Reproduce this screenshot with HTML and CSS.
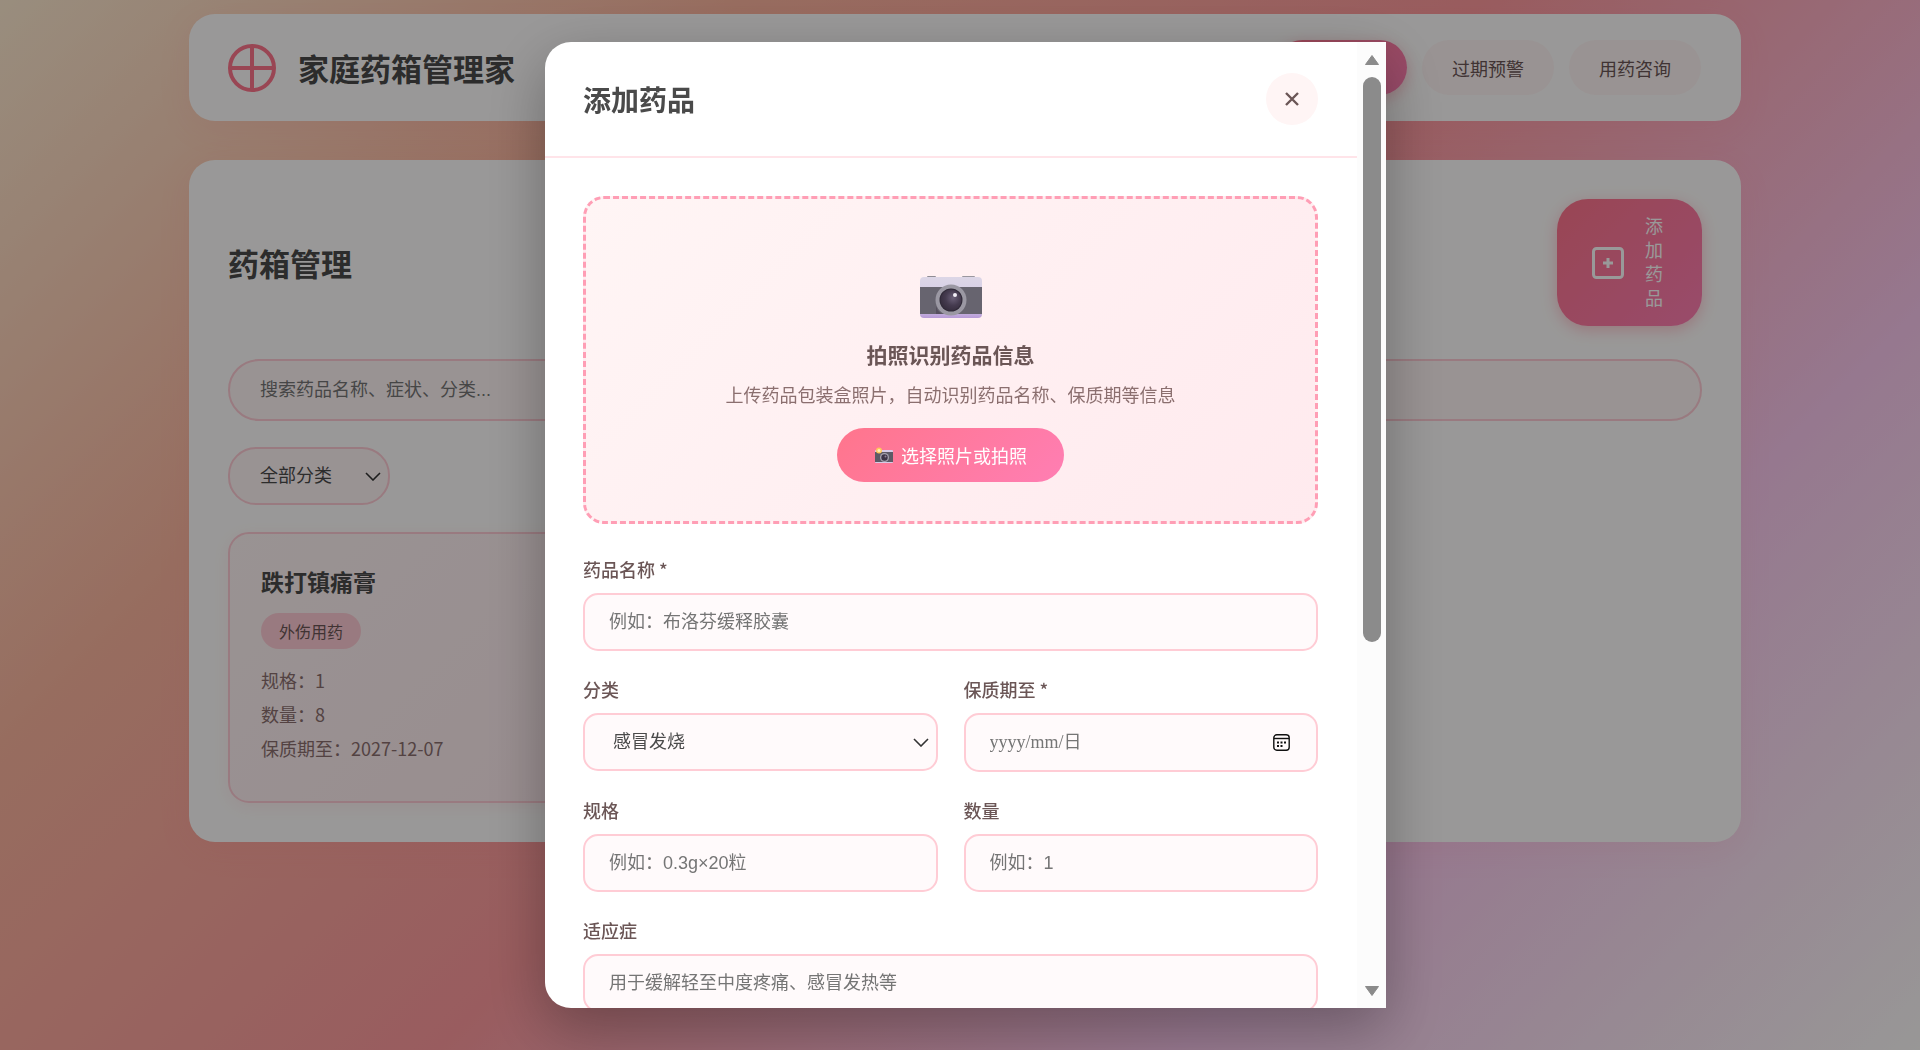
FILE: index.html
```html
<!DOCTYPE html>
<html lang="zh-CN">
<head>
    <meta charset="UTF-8">
    <meta name="viewport" content="width=device-width, initial-scale=1.0">
    <title>家庭药箱管理家</title>
    <link rel="stylesheet" href="styles.css">
</head>
<body>
    <div class="container">
        <header class="header">
            <div class="logo">
                <svg class="logo-icon" viewBox="0 0 48 48" fill="none" stroke="#ff758c" stroke-width="4">
                    <circle cx="24" cy="24" r="22"/>
                    <path d="M24 2v44M2 24h44"/>
                </svg>
                <h1>家庭药箱管理家</h1>
            </div>
            <nav class="nav">
                <button type="button" class="nav-btn active">药箱管理</button>
                <button type="button" class="nav-btn">过期预警</button>
                <button type="button" class="nav-btn">用药咨询</button>
            </nav>
        </header>

        <main class="panel">
            <div class="panel-header">
                <h2>药箱管理</h2>
                <button type="button" class="add-btn">
                    <svg class="add-icon" viewBox="0 0 32 32" fill="none" stroke="currentColor" stroke-width="3">
                        <rect x="1.5" y="1.5" width="29" height="29" rx="3"/>
                        <path d="M16 11v10M11 16h10"/>
                    </svg>
                    <span class="add-text">添加药品</span>
                </button>
            </div>
            <input type="text" class="search" placeholder="搜索药品名称、症状、分类..." aria-label="搜索药品">
            <select class="filter" aria-label="药品分类">
                <option>全部分类</option>
                <option>感冒发烧</option>
                <option>外伤用药</option>
            </select>
            <div class="medicine-grid">
                <article class="medicine-card">
                    <h3>跌打镇痛膏</h3>
                    <span class="tag">外伤用药</span>
                    <p>规格：1</p>
                    <p>数量：8</p>
                    <p>保质期至：2027-12-07</p>
                </article>
            </div>
        </main>
    </div>

    <div class="overlay">
        <div class="modal" role="dialog" aria-labelledby="modalTitle">
            <div class="modal-content">
                <div class="modal-header">
                    <h2 id="modalTitle">添加药品</h2>
                    <button type="button" class="close-btn" aria-label="关闭">
                        <svg viewBox="0 0 14 14" fill="none" stroke="currentColor" stroke-width="2.4">
                            <path d="M1 1l12 12M13 1L1 13"/>
                        </svg>
                    </button>
                </div>
                <form class="modal-body">
                    <div class="upload">
                        <svg class="camera" viewBox="0 0 62 42">
                            <defs>
                                <linearGradient id="cameraBody" x1="0" y1="0" x2="0" y2="1">
                                    <stop offset="0" stop-color="#dcd6e6"/>
                                    <stop offset=".75" stop-color="#d3c8e6"/>
                                    <stop offset="1" stop-color="#b79ad6"/>
                                </linearGradient>
                                <radialGradient id="cameraLens" cx=".6" cy=".4" r=".6">
                                    <stop offset="0" stop-color="#6b6078"/>
                                    <stop offset=".6" stop-color="#453b4f"/>
                                    <stop offset="1" stop-color="#382f40"/>
                                </radialGradient>
                            </defs>
                            <rect x="7" y="0" width="9" height="4" rx="1" fill="#8f8c94"/>
                            <rect x="42" y="0" width="13" height="4" rx="1" fill="#9a979f"/>
                            <rect x="0" y="1" width="62" height="41" rx="4" fill="url(#cameraBody)"/>
                            <rect x="0" y="11" width="62" height="27" fill="#67646f"/>
                            <path d="M16 30q2 8 9 8h-9z" fill="#57505f"/>
                            <circle cx="31" cy="24" r="15.5" fill="#9b98a3"/>
                            <circle cx="31" cy="24" r="11.5" fill="#2f2937"/>
                            <circle cx="31" cy="24" r="10.5" fill="url(#cameraLens)"/>
                            <circle cx="35" cy="19" r="2" fill="#f3f0f7"/>
                        </svg>
                        <h3>拍照识别药品信息</h3>
                        <p>上传药品包装盒照片，自动识别药品名称、保质期等信息</p>
                        <button type="button" class="upload-btn">
                            <svg class="camera-small" viewBox="0 0 20 16">
                                <rect x="1" y="3" width="18" height="13" rx="1" fill="#d6cbe6"/>
                                <rect x="1" y="5" width="18" height="10" fill="#5d5a66"/>
                                <circle cx="10.5" cy="10.5" r="4.5" fill="#a7a3b0"/>
                                <circle cx="10.5" cy="10.5" r="3.2" fill="#3c3446"/>
                                <circle cx="11.5" cy="9.5" r="1" fill="#8b8396"/>
                                <circle cx="5" cy="3.5" r="3" fill="#ffc65c"/>
                                <circle cx="5" cy="3.5" r="1.5" fill="#fff0b8"/>
                            </svg>
                            <span>选择照片或拍照</span>
                        </button>
                    </div>

                    <div class="form-group">
                        <label for="name">药品名称 *</label>
                        <input type="text" id="name" placeholder="例如：布洛芬缓释胶囊">
                    </div>
                    <div class="form-row">
                        <div class="form-group">
                            <label for="category">分类</label>
                            <select id="category">
                                <option>感冒发烧</option>
                                <option>外伤用药</option>
                            </select>
                        </div>
                        <div class="form-group">
                            <label for="expiry">保质期至 *</label>
                            <div class="date-field">
                                <input type="text" id="expiry" placeholder="yyyy/mm/日">
                                <svg class="calendar" viewBox="0 0 17 17" fill="none" stroke="#111" stroke-width="1.4">
                                    <rect x=".8" y=".8" width="15.4" height="15.4" rx="3"/>
                                    <path d="M1 4.5h15"/>
                                    <path d="M4 8.5h2M7.5 8.5h2M11 8.5h2M4 12h2M7.5 12h2" stroke-width="2"/>
                                </svg>
                            </div>
                        </div>
                    </div>
                    <div class="form-row">
                        <div class="form-group">
                            <label for="spec">规格</label>
                            <input type="text" id="spec" placeholder="例如：0.3g×20粒">
                        </div>
                        <div class="form-group">
                            <label for="amount">数量</label>
                            <input type="text" id="amount" placeholder="例如：1">
                        </div>
                    </div>
                    <div class="form-group">
                        <label for="usage">适应症</label>
                        <input type="text" id="usage" placeholder="用于缓解轻至中度疼痛、感冒发热等">
                    </div>
                </form>
            </div>
            <div class="scrollbar" aria-hidden="true">
                <svg viewBox="0 0 16 12"><path d="M8 1.5L14.5 10.5H1.5z"/></svg>
                <div class="scroll-track"><div class="scroll-thumb"></div></div>
                <svg viewBox="0 0 16 12"><path d="M8 10.5L1.5 1.5h13z"/></svg>
            </div>
        </div>
    </div>
</body>
</html>
```
FILE: styles.css
```css
* {
    margin: 0;
    padding: 0;
    box-sizing: border-box;
}
body {
    min-height: 100vh;
    padding: 14px 8px 14px 18px;
    font-family: "Noto Sans CJK SC", sans-serif;
    font-size: 18px;
    color: #4a4a4a;
    background: linear-gradient(135deg, #ffecd2 0%, #fcb69f 25%, #ff9a9e 50%, #fbc8ee 75%, #fdfcfb 100%);
}
button, input, select {
    font-family: "Liberation Sans", "Noto Sans CJK SC", sans-serif;
    font-size: 18px;
}
button {
    border: none;
    cursor: pointer;
}
.container {
    max-width: 1552px;
    margin: 0 auto;
}

/* header */
.header {
    display: flex;
    justify-content: space-between;
    align-items: center;
    padding: 26px 40px 26px 39px;
    margin-bottom: 39px;
    background: #fffefd;
    border-radius: 26px;
    box-shadow: 0 8px 32px rgba(255, 117, 140, 0.1);
}
.logo {
    display: flex;
    align-items: center;
    gap: 22px;
}
.logo-icon {
    width: 48px;
    height: 48px;
}
.logo h1, .panel-header h2 {
    font-size: 31px;
    line-height: 46px;
}
.nav {
    display: flex;
    gap: 15px;
}
.nav-btn {
    height: 55px;
    padding: 0 30px;
    border-radius: 28px;
    background: #fff5f5;
    color: #6b5656;
}
.nav-btn.active {
    color: white;
    background: linear-gradient(135deg, #ff758c, #ff7eb3);
    box-shadow: 0 4px 15px rgba(255, 117, 140, 0.4);
}

/* medicine panel */
.panel {
    padding: 39px;
    background: #fffefd;
    border-radius: 26px;
    box-shadow: 0 8px 32px rgba(255, 117, 140, 0.1);
}
.panel-header {
    display: flex;
    justify-content: space-between;
    align-items: center;
    margin-bottom: 33px;
}
.add-btn {
    display: flex;
    align-items: center;
    gap: 21px;
    padding: 16px 39px 15px 35px;
    border-radius: 31px;
    color: white;
    background: linear-gradient(135deg, #ff758c, #ff7eb3);
    box-shadow: 0 4px 15px rgba(255, 117, 140, 0.4);
}
.add-icon {
    width: 32px;
    height: 32px;
}
.add-text {
    width: 18px;
    line-height: 24px;
}
.search {
    display: block;
    width: 100%;
    height: 62px;
    padding: 0 30px;
    margin-bottom: 26px;
    border: 2px solid #ffccd5;
    border-radius: 31px;
    background: #fff5f5;
}
input::placeholder {
    color: #757575;
    opacity: 1;
}
select {
    appearance: none;
    color: #4a4a4a;
    background-image: url("data:image/svg+xml,%3Csvg xmlns='http://www.w3.org/2000/svg' viewBox='0 0 16 9' fill='none' stroke='%23333' stroke-width='1.6'%3E%3Cpath d='M1 1l7 7 7-7'/%3E%3C/svg%3E");
    background-repeat: no-repeat;
    background-position: right 7px center;
    background-size: 16px 9px;
}
.filter {
    display: block;
    width: 162px;
    height: 58px;
    padding: 0 30px;
    margin-bottom: 27px;
    border: 2px solid #ffccd5;
    border-radius: 28px;
    background-color: #fff5f5;
}
.medicine-grid {
    display: grid;
    grid-template-columns: repeat(3, 1fr);
    gap: 24px;
}
.medicine-card {
    padding: 29px 31px 36px;
    border: 2px solid #ffccd5;
    border-radius: 21px;
    background: linear-gradient(135deg, #fff5f5, #ffeaee);
    box-shadow: 0 4px 15px rgba(255, 117, 140, 0.1);
}
.medicine-card h3 {
    font-size: 23px;
    line-height: 36px;
    margin-bottom: 14px;
}
.tag {
    display: inline-block;
    padding: 0 18px;
    margin-bottom: 14px;
    border-radius: 18px;
    font-size: 16px;
    line-height: 36px;
    color: #6b5656;
    background: #ffccd5;
}
.medicine-card p {
    line-height: 34px;
    color: #8b6f6f;
}

/* modal */
.overlay {
    position: fixed;
    inset: 0;
    display: flex;
    justify-content: center;
    align-items: center;
    padding-left: 11px;
    background: rgba(0, 0, 0, 0.4);
}
.modal {
    display: flex;
    width: 100%;
    max-width: 841px;
    height: 92vh;
    overflow: hidden;
    background: white;
    border-radius: 26px 0 0 26px;
    box-shadow: 0 20px 60px rgba(0, 0, 0, 0.3);
}
.modal-content {
    flex: 1;
    min-width: 0;
    overflow-y: auto;
    scrollbar-width: none;
}
.modal-header {
    display: flex;
    justify-content: space-between;
    align-items: center;
    padding: 31px 39px 31px 38px;
    border-bottom: 2px solid #ffe4e9;
}
.modal-header h2 {
    font-size: 28px;
    line-height: 42px;
}
.close-btn {
    display: flex;
    justify-content: center;
    align-items: center;
    width: 52px;
    height: 52px;
    border-radius: 50%;
    color: #6b5656;
    background: #fff5f5;
}
.close-btn svg {
    width: 14px;
    height: 14px;
}
.modal-body {
    padding: 38px 39px 38px 38px;
}
.upload {
    display: flex;
    flex-direction: column;
    align-items: center;
    padding: 77px 40px 39px;
    margin-bottom: 31px;
    border: 3px dashed #ff9eb5;
    border-radius: 21px;
    background: linear-gradient(135deg, #fff5f5, #ffeaee);
}
.camera {
    width: 62px;
    height: 42px;
    margin-bottom: 20px;
}
.upload h3 {
    font-size: 21px;
    line-height: 32px;
    margin-bottom: 10px;
    color: #6b5656;
}
.upload p {
    line-height: 28px;
    margin-bottom: 20px;
    color: #8b6f6f;
}
.upload-btn {
    display: flex;
    align-items: center;
    gap: 7px;
    height: 54px;
    padding: 0 37px;
    border-radius: 27px;
    color: white;
    background: linear-gradient(135deg, #ff758c, #ff7eb3);
}
.camera-small {
    width: 20px;
    height: 16px;
}
.form-row {
    display: grid;
    grid-template-columns: 1fr 1fr;
    gap: 26px;
}
.form-group {
    margin-bottom: 24px;
}
.form-group label {
    display: block;
    margin-bottom: 10px;
    line-height: 28px;
    font-weight: 500;
    color: #6b5656;
}
.form-group input, .form-group select {
    display: block;
    width: 100%;
    height: 58px;
    padding: 0 24px;
    border: 2px solid #ffccd5;
    border-radius: 15px;
    background-color: #fffafb;
}
.form-group select {
    padding: 0 28px;
}
.date-field {
    position: relative;
}
.form-group .date-field input {
    height: 59px;
    font-family: "Liberation Serif", "Noto Sans CJK SC", serif;
}
.calendar {
    position: absolute;
    top: 21px;
    right: 28px;
    width: 17px;
    height: 17px;
}
.scrollbar {
    display: flex;
    flex-direction: column;
    align-items: center;
    gap: 11px;
    width: 29px;
    padding: 12px 0 11px;
    background: #fcfcfc;
}
.scrollbar svg {
    width: 16px;
    height: 12px;
    fill: #8b8b8b;
    stroke: #8b8b8b;
    stroke-linejoin: round;
}
.scroll-track {
    flex: 1;
}
.scroll-thumb {
    width: 18px;
    height: 63%;
    border-radius: 9px;
    background: #8b8b8b;
}
```
